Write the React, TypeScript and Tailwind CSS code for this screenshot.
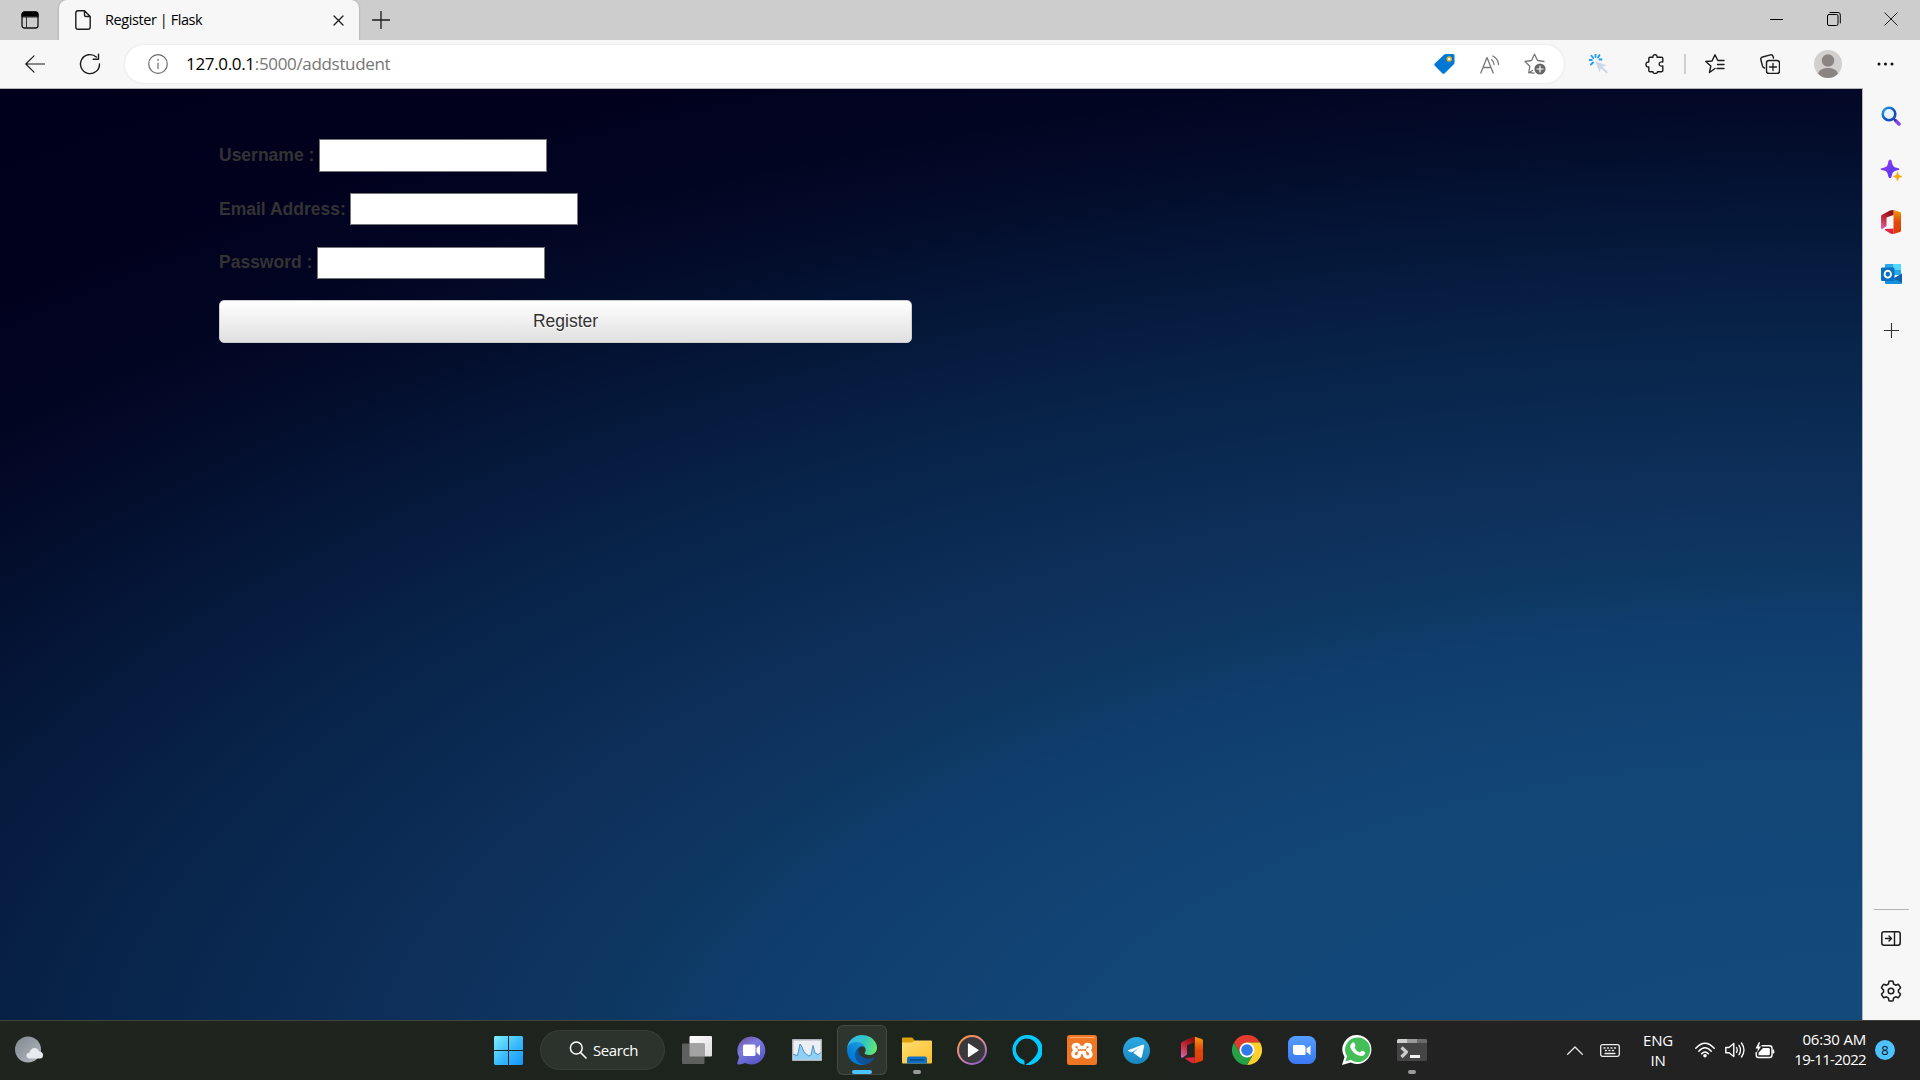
import React from "react";

const UI = "font-['Open_Sans','Noto_Sans',sans-serif]";

type IconProps = { w: number; h?: number; box?: string; children: React.ReactNode; className?: string };

/** Inline drawing whose view box defaults to its pixel size. */
function Icon({ w, h = w, box, children, className = "" }: IconProps) {
  return (
    <svg width={w} height={h} viewBox={box ?? `0 0 ${w} ${h}`} fill="none" strokeLinecap="round" strokeLinejoin="round" className={`block shrink-0 ${className}`}>
      {children}
    </svg>
  );
}

function Slot({ className, children }: { className: string; children: React.ReactNode }) {
  return <div className={`flex shrink-0 items-center justify-center ${className}`}>{children}</div>;
}

const INK = "#1b1b1b";

function OfficeLogo({ id, w, h }: { id: string; w: number; h: number }) {
  return (
    <Icon w={w} h={h} box="0 0 20 24">
      <defs>
        <linearGradient id={`${id}r`} x1="0" y1="0" x2="0" y2="1">
          <stop offset="0" stopColor="#f59a0c" />
          <stop offset="0.5" stopColor="#e2480b" />
          <stop offset="1" stopColor="#dc3c06" />
        </linearGradient>
        <linearGradient id={`${id}l`} x1="0.6" y1="0" x2="0.1" y2="1">
          <stop offset="0" stopColor="#8a0f12" />
          <stop offset="0.5" stopColor="#c92b3c" />
          <stop offset="1" stopColor="#d466b4" />
        </linearGradient>
      </defs>
      <path d="M12.500 0 19 2q1 .4 1 1.500V20.500q0 1.100-1 1.500L12.500 24Z" fill={`url(#${id}r)`} />
      <path d="M12.500 0V5L5.500 7.500V16L1.500 19Q0 19.500 0 18V6.500Q0 5.400 1 4.800L9 .6Q10.500 0 12.500 0Z" fill={`url(#${id}l)`} />
      <path d="M4 19 12.500 18.500V24H11Q10 24 9 23.300L4.500 20.500Q3.500 19.500 4 19Z" fill="#e0253f" />
    </Icon>
  );
}

function TabStrip() {
  return (
    <div className="flex h-10 shrink-0 bg-[#cdcdcd]">
      <Slot className="w-[59px]">
        <Icon w={18}>
          <rect x="1" y="1" width="16" height="16" rx="2.500" stroke="#111" strokeWidth="1.300" />
          <path d="M1 5.500V3.500Q1 1 3.500 1H14.500Q17 1 17 3.500V5.500Z" fill="#000" stroke="#000" />
          <path d="M5.500 6V17" stroke="#333" strokeWidth="1" />
        </Icon>
      </Slot>
      <div className="flex w-[300px] shrink-0 items-center rounded-t-lg bg-[#f7f7f7] shadow-[0_0_2px_rgba(0,0,0,0.3)]">
        <Slot className="w-[46px] pl-0.5">
          <Icon w={16} h={20}>
            <path d="M3 .8H9.500L15.200 6.500V17Q15.200 19.200 13 19.200H3Q.8 19.200 .8 17V3Q.8 .8 3 .8ZM9.500 .8V5Q9.500 6.500 11 6.500H15.200" stroke={INK} strokeWidth="1.400" />
          </Icon>
        </Slot>
        <span className={`w-[212px] whitespace-nowrap text-[14.5px] tracking-[-0.42px] text-black ${UI}`}>Register | Flask</span>
        <Slot className="w-[42px] pt-px">
          <Icon w={11}>
            <path d="M1 1 10 10M10 1 1 10" stroke={INK} strokeWidth="1.300" />
          </Icon>
        </Slot>
      </div>
      <Slot className="w-[43px] pb-px">
        <Icon w={18}>
          <path d="M9 .5V17.500M.5 9H17.500" stroke={INK} strokeWidth="1.300" />
        </Icon>
      </Slot>
      <div className="flex-1" />
      <Slot className="w-[57px] pb-0.5">
        <Icon w={13}>
          <path d="M0 6.500H13" stroke="#000" strokeWidth="1" />
        </Icon>
      </Slot>
      <Slot className="w-[57px] pb-0.5">
        <Icon w={14}>
          <rect x=".5" y="2.500" width="10.500" height="11" rx="1.500" stroke="#000" />
          <path d="M3 .5H11Q13.300 .5 13.300 3V11" stroke="#000" />
        </Icon>
      </Slot>
      <Slot className="w-[58px] pb-0.5">
        <Icon w={14}>
          <path d="M.8 .8 13.200 13.200M13.200 .8 .8 13.200" stroke="#222" />
        </Icon>
      </Slot>
    </div>
  );
}

function Toolbar() {
  return (
    <div className="flex h-12 shrink-0 items-center bg-[#f7f7f7]">
      <Slot className="w-[70px]">
        <Icon w={20} h={18}>
          <path d="M1 9H19.500M9 .8 .8 9 9 17.200" stroke={INK} strokeWidth="1.200" />
        </Icon>
      </Slot>
      <Slot className="w-[40px]">
        <Icon w={22}>
          <path d="M20.500 11A9.500 9.500 0 1 1 17.300 4" stroke={INK} strokeWidth="1.400" />
          <path d="M19.500 1.200V6.300H14.200" stroke={INK} strokeWidth="1.400" />
        </Icon>
      </Slot>
      <div className="ml-[15px] flex h-[38px] w-[1439px] shrink-0 items-center rounded-full bg-white shadow-[0_0_3px_rgba(0,0,0,0.1)]">
        <Slot className="w-[61px] pl-[4px]">
          <Icon w={20}>
            <circle cx="10" cy="10" r="9.300" stroke="#6b6b6b" strokeWidth="1.200" />
            <path d="M10 9V14.500" stroke="#6b6b6b" strokeWidth="1.200" />
            <circle cx="10" cy="5.800" r=".9" fill="#6b6b6b" />
          </Icon>
        </Slot>
        <span className={`flex-1 whitespace-nowrap text-[17px] tracking-[-0.33px] text-[#767676] ${UI}`}>
          <span className="text-black">127.0.0.1</span>:5000/addstudent
        </span>
        <Slot className="w-[45px]">
          <Icon w={21} h={20}>
            <path d="M12 0H19Q20.500 0 20.500 1.500V8.500Q20.500 9.500 19.800 10.200L10.500 19.400Q9.500 20.300 8.500 19.400L.8 11.700Q-.2 10.600 .8 9.600L10 .8Q10.900 0 12 0Z" fill="#0078d4" />
            <circle cx="15.200" cy="5" r="2" fill="#fff" stroke="#e8ae1c" strokeWidth="1.500" />
          </Icon>
        </Slot>
        <Slot className="w-[45px] pl-px">
          <Icon w={20} h={19}>
            <path d="M.8 18 7 2.500 13.200 18M3 12.500H11" stroke="#777" strokeWidth="1.300" />
            <path d="M11.500 4.500Q13.700 6 14 9.500M12.800 1Q18 3.500 18.500 9.500" stroke="#777" strokeWidth="1.300" />
          </Icon>
        </Slot>
        <Slot className="mr-[6px] w-[46px]">
          <Icon w={22}>
            <path d="M10 20.200 4.800 19.500 5.800 13.200 1 8.500 7.500 7.500 10.500 1.200 13.500 7.500 20 8.500" stroke="#777" strokeWidth="1.300" />
            <path d="M8.500 17.500 5 19.700" stroke="#777" strokeWidth="1.300" />
            <circle cx="16" cy="16" r="5.600" fill="#666" />
            <path d="M16 13V19M13 16H19" stroke="#fff" strokeWidth="1.200" />
          </Icon>
        </Slot>
      </div>
      <Slot className="w-[70px]">
        <Icon w={20}>
          <path d="M6.500 .5V3M10.500 1 9 3.500M2.500 1.800 4.200 4M.5 6H2.800M2 10.500 4 8.500M12.500 5.500H10.500" stroke="#1a9bf5" strokeWidth="1.800" />
          <path d="M6 7 17.500 11.500 13.500 13 19 18 17.500 19.500 12 14.500 10.500 18Z" fill="#ccd7ea" />
        </Icon>
      </Slot>
      <Slot className="w-[42px]">
        <Icon w={20}>
          <path d="M5 3.200H8Q7.600 .8 10 .8T12 3.200H16.500Q17.800 3.200 17.800 4.500V8Q14.200 7.500 14.200 10T17.800 12V16.500Q17.800 17.800 16.500 17.800H12.500Q12.500 19.400 10.200 19.400T8 17.800H5Q3.800 17.800 3.800 16.500V13Q1 13.200 1 10.500T3.800 8V4.500Q3.800 3.200 5 3.200Z" stroke={INK} strokeWidth="1.400" />
        </Icon>
      </Slot>
      <Slot className="w-[18px]">
        <div className="h-5 w-[2px] bg-[#cfcfcf]" />
      </Slot>
      <Slot className="w-[42px]">
        <Icon w={20}>
          <path d="M10 14.500 4.500 18.500 5.800 12 .8 7.500 7 7 10 .8 12.800 6.500H19" stroke={INK} strokeWidth="1.400" />
          <path d="M12.500 10.500H19M12 14.500H19" stroke={INK} strokeWidth="1.400" />
        </Icon>
      </Slot>
      <Slot className="w-[68px]">
        <Icon w={20}>
          <rect x="6.500" y="6.500" width="13" height="13" rx="2.500" stroke={INK} strokeWidth="1.400" />
          <path d="M13 9.500V16.500M9.500 13H16.500" stroke={INK} strokeWidth="1.300" />
          <path d="M4.500 14Q3 13.500 2.500 12L.8 5.500Q.5 3.500 2.500 3L10.500 .8Q12.500 .5 13 2.200L13.500 4" stroke={INK} strokeWidth="1.400" />
        </Icon>
      </Slot>
      <Slot className="w-[48px]">
        <Icon w={28}>
          <circle cx="14" cy="14" r="14" fill="#d2d0ce" />
          <circle cx="14" cy="10.500" r="6.200" fill="#8a8583" />
          <path d="M4 23.500Q6 18 14 18T24 23.500Q20 28 14 28T4 23.500Z" fill="#8a8583" />
        </Icon>
      </Slot>
      <Slot className="w-[66px]">
        <Icon w={17} h={4}>
          <circle cx="2" cy="2" r="1.500" fill="#111" />
          <circle cx="8.500" cy="2" r="1.500" fill="#111" />
          <circle cx="15" cy="2" r="1.500" fill="#111" />
        </Icon>
      </Slot>
    </div>
  );
}

function Field({ label, type }: { label: string; type: string }) {
  return (
    <label className="flex h-[32.5px] items-center gap-[4.6px]">
      <span className="whitespace-nowrap text-[17.5px] font-bold leading-[25px] text-[#333]">{label}</span>
      <input type={type} className="h-full w-[228px] border border-[#767676] bg-white outline-none" />
    </label>
  );
}

function Page() {
  return (
    <main className="flex-1 border-t border-[#b5b5b5] bg-[radial-gradient(128%_110%_at_100%_110%,#124a7b_0%,#124a7b_14%,#124677_34%,#0f3d6d_48%,#0d3862_53%,#0e315c_60%,#08244a_75%,#051739_87%,#030d2c_95%,#020522_103%,#01011e_112%,#00001c_125%)] font-['Liberation_Sans',Arial,sans-serif]">
      <form className="flex w-[912px] flex-col gap-[21.3px] pl-[219px] pt-[50px]">
        <Field label="Username :" type="text" />
        <Field label="Email Address:" type="text" />
        <Field label="Password :" type="password" />
        <button type="button" className="h-[43px] w-[693px] rounded-[5px] border border-[#ccc] bg-linear-to-b from-white to-[#e0e0e0] text-[17.5px] leading-[25px] text-[#333] [text-shadow:0_1px_0_#fff]">
          Register
        </button>
      </form>
    </main>
  );
}

function Sidebar() {
  return (
    <aside className="flex w-[58px] shrink-0 flex-col items-center border-l border-[#b5b5b5] bg-[#f7f7f7] pr-px">
      <Slot className="mt-[1px] h-[54px]">
        <Icon w={20}>
          <defs>
            <linearGradient id="lens" x1="0" y1="0" x2="1" y2="1">
              <stop offset="0" stopColor="#29a9ea" />
              <stop offset=".5" stopColor="#0b57d0" />
              <stop offset="1" stopColor="#1746b5" />
            </linearGradient>
          </defs>
          <path d="M14.500 14.500 18 18" stroke="#8048e8" strokeWidth="3.500" />
          <path d="M12 12 14.500 14.500" stroke="#36348d" strokeWidth="1.800" />
          <circle cx="8" cy="8" r="6.300" stroke="url(#lens)" strokeWidth="2.600" fill="#e8f4ff" />
        </Icon>
      </Slot>
      <Slot className="h-[54px]">
        <Icon w={22}>
          <defs>
            <linearGradient id="spark" x1="0" y1="0" x2="1" y2="1">
              <stop offset="0" stopColor="#b43af0" />
              <stop offset=".55" stopColor="#6438f3" />
              <stop offset="1" stopColor="#7b3ff2" />
            </linearGradient>
          </defs>
          <path d="M10 .5Q11.200 .5 11.600 2Q12.500 7 14.500 8.200L18.500 9.200Q20.500 10 18.500 10.900Q13.500 12 12.500 14L11.500 18Q10 20.500 8.500 18Q7.800 13.500 6 12L1.500 10.900Q-.5 10 1.500 9.200Q6.500 8.500 7.500 6L8.500 2Q8.900 .5 10 .5Z" fill="url(#spark)" />
          <path d="M17.500 13 18.800 16.200 22 17.500 18.800 18.800 17.500 22 16.200 18.800 13 17.500 16.200 16.200Z" fill="#f2ab0c" stroke="#f2ab0c" strokeWidth=".5" />
        </Icon>
      </Slot>
      <Slot className="h-[50px] pb-px">
        <OfficeLogo id="side" w={20} h={24} />
      </Slot>
      <Slot className="h-[54px]">
        <Icon w={21} h={20}>
          <rect x="4" y="0" width="16" height="11" rx="1" fill="#28a8ea" />
          <rect x="12" y="0" width="8" height="6" fill="#50d9ff" />
          <path d="M4 9 12 15 21 9.500V19Q21 20 20 20H5Q4 20 4 19Z" fill="#1490df" />
          <path d="M21 9.500V19L12.500 14.500Z" fill="#0f62a8" />
          <rect x="0" y="3.500" width="13.500" height="13.500" rx="1.200" fill="#0870c4" />
          <ellipse cx="6.800" cy="10.200" rx="3.200" ry="3.400" stroke="#fff" strokeWidth="1.900" />
        </Icon>
      </Slot>
      <Slot className="h-[60px] pb-px">
        <Icon w={15}>
          <path d="M7.500 0V15M0 7.500H15" stroke="#333" strokeWidth="1.100" />
        </Icon>
      </Slot>
      <div className="mt-auto h-px w-[35px] bg-[#b4b4b4]" />
      <Slot className="h-[58px] pb-px">
        <Icon w={20} h={15}>
          <rect x=".8" y=".8" width="18.400" height="13.400" rx="2.200" stroke={INK} strokeWidth="1.500" />
          <path d="M13.500 1V14M4.500 7.500H10.500M8 5 10.500 7.500 8 10" stroke={INK} strokeWidth="1.400" />
        </Icon>
      </Slot>
      <Slot className="mb-[6px] h-[46px]">
        <Icon w={22}>
          <path d="M9 1.200Q11 .6 13 1.200L13.600 4Q15 4.600 15.600 5.200L18.300 4.200Q20 6 20.500 8L18.400 10Q18.600 11 18.400 12L20.500 14Q20 16 18.300 17.800L15.600 16.800Q15 17.500 13.600 18L13 20.800Q11 21.400 9 20.800L8.400 18Q7 17.500 6.400 16.800L3.700 17.800Q2 16 1.500 14L3.600 12Q3.400 11 3.600 10L1.500 8Q2 6 3.700 4.200L6.400 5.200Q7 4.600 8.400 4Z" stroke={INK} strokeWidth="1.500" />
          <circle cx="11" cy="11" r="2.800" stroke={INK} strokeWidth="1.500" />
        </Icon>
      </Slot>
    </aside>
  );
}

function EdgeLogo() {
  return (
    <Icon w={30} box="0 0 256 256">
      <defs>
        <linearGradient id="ea" x1="63" y1="177" x2="241" y2="177" gradientUnits="userSpaceOnUse">
          <stop offset="0" stopColor="#0c59a4" />
          <stop offset="1" stopColor="#114a8b" />
        </linearGradient>
        <linearGradient id="eb" x1="157" y1="99" x2="46" y2="220" gradientUnits="userSpaceOnUse">
          <stop offset="0" stopColor="#1b9de2" />
          <stop offset=".2" stopColor="#1595df" />
          <stop offset=".7" stopColor="#0680d7" />
          <stop offset="1" stopColor="#0078d4" />
        </linearGradient>
        <linearGradient id="ec" x1="20" y1="60" x2="250" y2="130" gradientUnits="userSpaceOnUse">
          <stop offset="0" stopColor="#35b8f1" />
          <stop offset=".5" stopColor="#32c5c0" />
          <stop offset="1" stopColor="#66eb6e" />
        </linearGradient>
      </defs>
      <path d="M231 190.500c-3.400 1.800-6.900 3.400-10.500 4.700a101.700 101.700 0 0 1-35.900 6.500c-47.300 0-88.500-32.500-88.500-74.300a31.500 31.500 0 0 1 16.400-27.300c-42.800 1.800-53.800 46.400-53.800 72.500 0 73.900 68.100 81.400 82.800 81.400 7.900 0 19.800-2.300 27-4.600l1.300-.4a128.300 128.300 0 0 0 66.600-52.800 4 4 0 0 0-5.400-5.700Z" fill="url(#ea)" />
      <path d="M105.700 241.400a79.200 79.200 0 0 1-22.700-21.300 80.700 80.700 0 0 1 29.500-120c3.200-1.500 8.500-4.100 15.600-4a32.400 32.400 0 0 1 25.700 13 31.900 31.900 0 0 1 6.300 18.700c0-.2 24.500-79.600-80-79.600-43.900 0-80 41.700-80 78.200a130.200 130.200 0 0 0 12.100 56 128 128 0 0 0 156.400 67 75.500 75.500 0 0 1-62.800-8Z" fill="url(#eb)" />
      <path d="M152.300 148.900c-.8 1-3.300 2.500-3.300 5.700 0 2.600 1.700 5.100 4.700 7.200 14.400 10 41.500 8.700 41.600 8.700a59.600 59.600 0 0 0 30.300-8.400 61.400 61.400 0 0 0 30.400-52.900c.3-22.400-8-37.300-11.300-43.900C223.500 23.900 177.700 0 128 0A128 128 0 0 0 0 126.200c.5-36.500 36.800-66 80-66 3.500 0 23.500.3 42 10 16.300 8.600 24.900 18.900 30.800 29.200 6.200 10.700 7.300 24.100 7.300 29.500s-2.700 13.300-7.800 20Z" fill="url(#ec)" />
    </Icon>
  );
}

function TaskApp({ children, active = false, running = false }: { children: React.ReactNode; active?: boolean; running?: boolean }) {
  return (
    <div className="flex w-[55px] shrink-0 items-center justify-center">
      <div className={`relative flex h-[50px] w-[50px] items-center justify-center rounded-md ${active ? "border border-white/10 bg-white/8" : ""}`}>
        {children}
        {active && <div className="absolute bottom-0 left-1/2 h-1 w-5 -translate-x-1/2 rounded-full bg-[#4cc2ff]" />}
        {running && <div className="absolute bottom-px left-1/2 h-1 w-2 -translate-x-1/2 rounded-full bg-[#9a9a9a]" />}
      </div>
    </div>
  );
}

function Taskbar() {
  return (
    <footer className="flex h-[60px] shrink-0 items-center border-t border-[#41443d] bg-linear-to-r from-[#20241f] via-[#1c241c] to-[#222222] to-78% pb-px">
      <div className="w-[480px] shrink-0 pl-[14px]">
        <Icon w={30} h={28}>
          <defs>
            <linearGradient id="moon" x1="0" y1="0" x2="1" y2="1">
              <stop offset="0" stopColor="#81878f" />
              <stop offset="1" stopColor="#b5bac2" />
            </linearGradient>
          </defs>
          <circle cx="14" cy="13.500" r="13" fill="url(#moon)" />
          <path d="M15.500 22.500Q12.500 22 12.500 19.500T15.500 16.500Q17 12 20.500 12T25 15.500Q29 15.500 29 19T26 22.500Z" fill="#e7eaee" />
        </Icon>
      </div>
      <Slot className="w-[56px]">
        <Icon w={29}>
          <defs>
            <linearGradient id="win" x1="0" y1="0" x2="29" y2="29" gradientUnits="userSpaceOnUse">
              <stop offset="0" stopColor="#7ff0ff" />
              <stop offset=".5" stopColor="#3dbdfb" />
              <stop offset="1" stopColor="#1396fa" />
            </linearGradient>
          </defs>
          <path d="M1 0H14V14H0V1ZM15 0H28L29 1V14H15ZM0 15H14V29H1L0 28ZM15 15H29V28L28 29H15Z" fill="url(#win)" />
        </Icon>
      </Slot>
      <div className="mx-1 flex h-10 w-[125px] shrink-0 items-center rounded-full border border-white/5 bg-[#2c322c] pl-[28px]">
        <Icon w={18}>
          <circle cx="7.300" cy="7" r="5.900" stroke="#fff" strokeWidth="1.500" />
          <path d="M11.500 11.500 17 17" stroke="#fff" strokeWidth="1.600" />
        </Icon>
        <span className={`ml-[6px] text-[15px] tracking-[-0.4px] text-white ${UI}`}>Search</span>
      </div>
      <TaskApp>
        <Icon w={30} h={28}>
          <defs>
            <linearGradient id="tv" x1="0" y1="0" x2="1" y2="1">
              <stop offset="0" stopColor="#fff" />
              <stop offset="1" stopColor="#dcdcdc" />
            </linearGradient>
          </defs>
          <rect x="7.500" y="0" width="22.500" height="20.500" rx="1" fill="url(#tv)" />
          <rect x="0" y="7.500" width="22.500" height="20.500" rx="1" fill="#5e605e" />
          <rect x="7.500" y="7.500" width="15" height="13" fill="#a2a3a2" />
        </Icon>
      </TaskApp>
      <TaskApp>
        <Icon w={29}>
          <defs>
            <linearGradient id="chat" x1="0.100" y1="0" x2=".7" y2="1">
              <stop offset="0" stopColor="#6f5196" />
              <stop offset=".4" stopColor="#7c7be0" />
              <stop offset="1" stopColor="#5556c4" />
            </linearGradient>
          </defs>
          <path d="M14.500 .5A14 14 0 1 1 8 27Q5 28.500 1.200 28.500Q-.5 28 .5 26.500L2 21A14 14 0 0 1 14.500 .5Z" fill="url(#chat)" />
          <rect x="6" y="8.500" width="12.500" height="11.500" rx="1.500" fill="#fff" />
          <path d="M19.500 12 23 9V19.500L19.500 16.500Z" fill="#fff" />
        </Icon>
      </TaskApp>
      <TaskApp>
        <Icon w={30} h={22}>
          <rect x=".7" y=".7" width="28.600" height="20.600" fill="#ecf0f3" stroke="#a9b0b8" strokeWidth="1.400" />
          <path d="M1.500 15.500 5.500 16.500 8 5 10 8 12 13 14.500 15 16.500 17 19 16 21 6.500 23 14 26 15.500 28.500 14V20.500H1.500Z" fill="#8fd0f6" />
          <path d="M1.500 15.500 5.500 16.500 8 5 10 8 12 13 14.500 15 16.500 17 19 16 21 6.500 23 14 26 15.500 28.500 14" stroke="#4b93c6" />
        </Icon>
      </TaskApp>
      <TaskApp active>
        <EdgeLogo />
      </TaskApp>
      <TaskApp running>
        <Icon w={30} h={27}>
          <defs>
            <linearGradient id="fold" x1="0" y1="0" x2="1" y2="1">
              <stop offset="0" stopColor="#ffdf72" />
              <stop offset="1" stopColor="#fdbd2a" />
            </linearGradient>
          </defs>
          <path d="M0 1.500Q0 .5 1 .5H9.500Q10.500 .5 11 1.300L12.500 3.500V8H0Z" fill="#e0a00c" />
          <path d="M0 5.500H10L12.500 3.500H29Q30 3.500 30 4.500V25.500Q30 26.500 29 26.500H1Q0 26.500 0 25.500Z" fill="url(#fold)" />
          <path d="M5 26.500V21.500Q5 19.500 7 19.500H23Q25 19.500 25 21.500V26.500Z" fill="#0f70c4" />
          <path d="M8.500 23H21.500" stroke="#074a87" strokeWidth="1.300" />
        </Icon>
      </TaskApp>
      <TaskApp>
        <Icon w={30}>
          <defs>
            <linearGradient id="mp" x1=".1" y1="0" x2=".8" y2="1">
              <stop offset="0" stopColor="#ff9838" />
              <stop offset=".5" stopColor="#e0889c" />
              <stop offset="1" stopColor="#8c5ccb" />
            </linearGradient>
          </defs>
          <circle cx="15" cy="15" r="14" fill="#39383b" stroke="url(#mp)" strokeWidth="2" />
          <path d="M11.500 9V21.500L21 15.200Z" fill="#fff" stroke="#fff" strokeWidth="1.200" />
        </Icon>
      </TaskApp>
      <TaskApp>
        <Icon w={30}>
          <path d="M15 0A15 15 0 0 0 12.500 29.700V26.500Q12.500 25.200 11.500 25A11 11 0 1 1 25.500 17.500Q22.500 24.500 13.500 29.800A15 15 0 1 0 15 0Z" fill="#00caff" />
        </Icon>
      </TaskApp>
      <TaskApp>
        <Icon w={30}>
          <rect width="30" height="30" rx="2.500" fill="#ef7622" />
          <path d="M3 2.500H27" stroke="#f7ad77" strokeWidth="1.200" />
          <path d="M9 9.500Q5.500 10 6.500 12.500T9.500 15Q5.500 17 6 19.500T9.500 22Q12.500 22 12.500 18.500V17.500H17.500V18.500Q17.500 22 20.500 22T24 19.500Q24 16.500 20.500 15Q23.500 14.500 23.500 12T21 9.500Q18 9 17.800 12.500H12.300Q12 9 9 9.500Z" stroke="#fff" strokeWidth="3.400" />
        </Icon>
      </TaskApp>
      <TaskApp>
        <Icon w={27}>
          <defs>
            <linearGradient id="tg" x1="0" y1="0" x2="0" y2="1">
              <stop offset="0" stopColor="#2daae6" />
              <stop offset="1" stopColor="#1a86be" />
            </linearGradient>
          </defs>
          <circle cx="13.500" cy="13.500" r="13.500" fill="url(#tg)" />
          <path d="M5.500 13.500 20 8Q21 7.800 20.700 9L18.500 19.800Q18.200 21 17 20.200L10.800 15.700 18 9.500 9 14.800Z" fill="#fff" stroke="#fff" strokeWidth=".8" />
        </Icon>
      </TaskApp>
      <TaskApp>
        <OfficeLogo id="task" w={22} h={28} />
      </TaskApp>
      <TaskApp>
        <Icon w={30} box="-15 -15 30 30">
          <path d="M-13 -7.500A15 15 0 0 1 13 -7.500L0 -7.500-6.500 3.750Z" fill="#e33b2e" />
          <path d="M13 -7.500A15 15 0 0 1 0 15L6.500 3.750 0 -7.500Z" fill="#fdd02e" />
          <path d="M0 15A15 15 0 0 1 -13 -7.500L-6.500 3.750 6.500 3.750Z" fill="#27a147" />
          <circle r="7.500" fill="#fff" />
          <circle r="5.800" fill="#2f7bea" />
        </Icon>
      </TaskApp>
      <TaskApp>
        <Icon w={28}>
          <defs>
            <linearGradient id="zm" x1="0" y1="0" x2="0" y2="1">
              <stop offset="0" stopColor="#559dff" />
              <stop offset="1" stopColor="#3a78f0" />
            </linearGradient>
          </defs>
          <rect width="28" height="28" rx="7.500" fill="url(#zm)" />
          <path d="M5 10Q5 9 6 9H14.500Q17.500 9 17.500 12V18Q17.500 19 16.500 19H8Q5 19 5 16ZM18.500 12.500 22.500 9.500V19L18.500 16Z" fill="#fff" />
        </Icon>
      </TaskApp>
      <TaskApp>
        <Icon w={30}>
          <path d="M15.500 0A14.500 14.500 0 1 1 8.500 27.500L0 30 2.500 22A14.500 14.500 0 0 1 15.500 0Z" fill="#fff" />
          <path d="M15.500 2.500A12.300 12.300 0 1 1 8.800 24.800L3.500 26.400 5 21.300A12.300 12.300 0 0 1 15.500 2.500Z" fill="#44bf57" />
          <path d="M10.500 7.500Q12 7 12.500 8.200L13.500 10.800Q13.600 11.500 12.500 12.800Q14.500 16.500 17.800 17.600L19.500 15.800Q20 15.500 20.500 15.800L23 17Q23.500 17.500 23 18.700Q22 21.200 19 21Q10.500 19.500 8.200 12Q8 9 10.500 7.500Z" fill="#fff" />
        </Icon>
      </TaskApp>
      <TaskApp running>
        <Icon w={30} h={22}>
          <rect width="30" height="22" rx="1.500" fill="#454545" />
          <path d="M1.500 0H10V4H0V1.500Q0 0 1.500 0Z" fill="#cfcfcf" />
          <path d="M10 0H20V4H10Z" fill="#9a9a9a" />
          <path d="M20 0H28.500Q30 0 30 1.500V4H20Z" fill="#6c6c6c" />
          <path d="M4.500 8.500 9.500 13 4.500 18" stroke="#cdcdcd" strokeWidth="3.200" strokeLinecap="butt" />
          <path d="M13 17.500H23" stroke="#f2f2f2" strokeWidth="3" strokeLinecap="butt" />
        </Icon>
      </TaskApp>
      <div className="flex-1" />
      <div className={`flex h-full shrink-0 items-center text-[15px] leading-5 text-white ${UI}`}>
        <Slot className="w-[35px]">
          <Icon w={16} h={9}>
            <path d="M.7 8.300 8 1 15.300 8.300" stroke="#e8e8e8" strokeWidth="1.300" />
          </Icon>
        </Slot>
        <Slot className="w-[35px]">
          <Icon w={20} h={13}>
            <rect x=".7" y=".7" width="18.600" height="11.600" rx="1.800" stroke="#eee" strokeWidth="1.300" />
            <path d="M4 4H5M7.500 4H8.500M11 4H12M14.500 4H15.500M5.500 6.500H6.500M9 6.500H10M12.500 6.500H13.500" stroke="#eee" strokeWidth="1.300" />
            <path d="M5 9.500H15" stroke="#eee" strokeWidth="1.300" />
          </Icon>
        </Slot>
        <Slot className="w-[62px]">
          <div className="text-center tracking-[-0.2px]">
            ENG
            <br />
            IN
          </div>
        </Slot>
        <Slot className="w-[31px]">
          <Icon w={20} h={16}>
            <path d="M.8 6.300Q10-3.800 19.200 6.300M3.800 9.200Q10 2.300 16.200 9.200M6.600 11.800Q10 8 13.400 11.800" stroke="#fff" strokeWidth="1.500" />
            <circle cx="10" cy="13.800" r="1.800" fill="#fff" />
          </Icon>
        </Slot>
        <Slot className="w-[30px]">
          <Icon w={20} h={16}>
            <path d="M.8 5.500H4L8.800 1.500V14.500L4 10.800H.8Z" stroke="#fff" strokeWidth="1.400" />
            <path d="M11.500 5.500Q13 8 11.500 10.500M14 3.300Q17 8 14 12.700M16.500 1Q21.500 8 16.500 15" stroke="#fff" strokeWidth="1.300" />
          </Icon>
        </Slot>
        <Slot className="w-[30px]">
          <Icon w={20} h={17}>
            <path d="M7 3.800H14.500Q17 3.800 17 6.300V13Q17 15.500 14.500 15.500H3.500Q1.200 15.500 1.200 13V10.500" stroke="#fff" strokeWidth="1.400" />
            <path d="M8 6H13.500Q14.800 6 14.800 7.300V12Q14.800 13.300 13.500 13.300H3.500V10.800Z" fill="#fff" />
            <path d="M17.500 7.500H19Q19.700 9.500 19 11.500H17.500Z" fill="#fff" />
            <path d="M4 0 .5 6.500H3L2 10.500 6 4.500H3.800L5 .5Z" fill="#fff" />
          </Icon>
        </Slot>
        <div className="w-[86px] pb-[3px] text-right">
          <div className="whitespace-nowrap tracking-[-0.2px]">06:30 AM</div>
          <div className="whitespace-nowrap tracking-[-0.65px]">19-11-2022</div>
        </div>
        <div className="ml-[9px] mr-[25px] flex h-5 w-5 items-center justify-center rounded-full bg-[#4cc2ff] text-[13px] text-[#111]">8</div>
      </div>
    </footer>
  );
}

export default function App() {
  return (
    <div className="flex h-[1080px] w-[1920px] flex-col overflow-hidden">
      <TabStrip />
      <Toolbar />
      <div className="flex flex-1">
        <Page />
        <Sidebar />
      </div>
      <Taskbar />
    </div>
  );
}
